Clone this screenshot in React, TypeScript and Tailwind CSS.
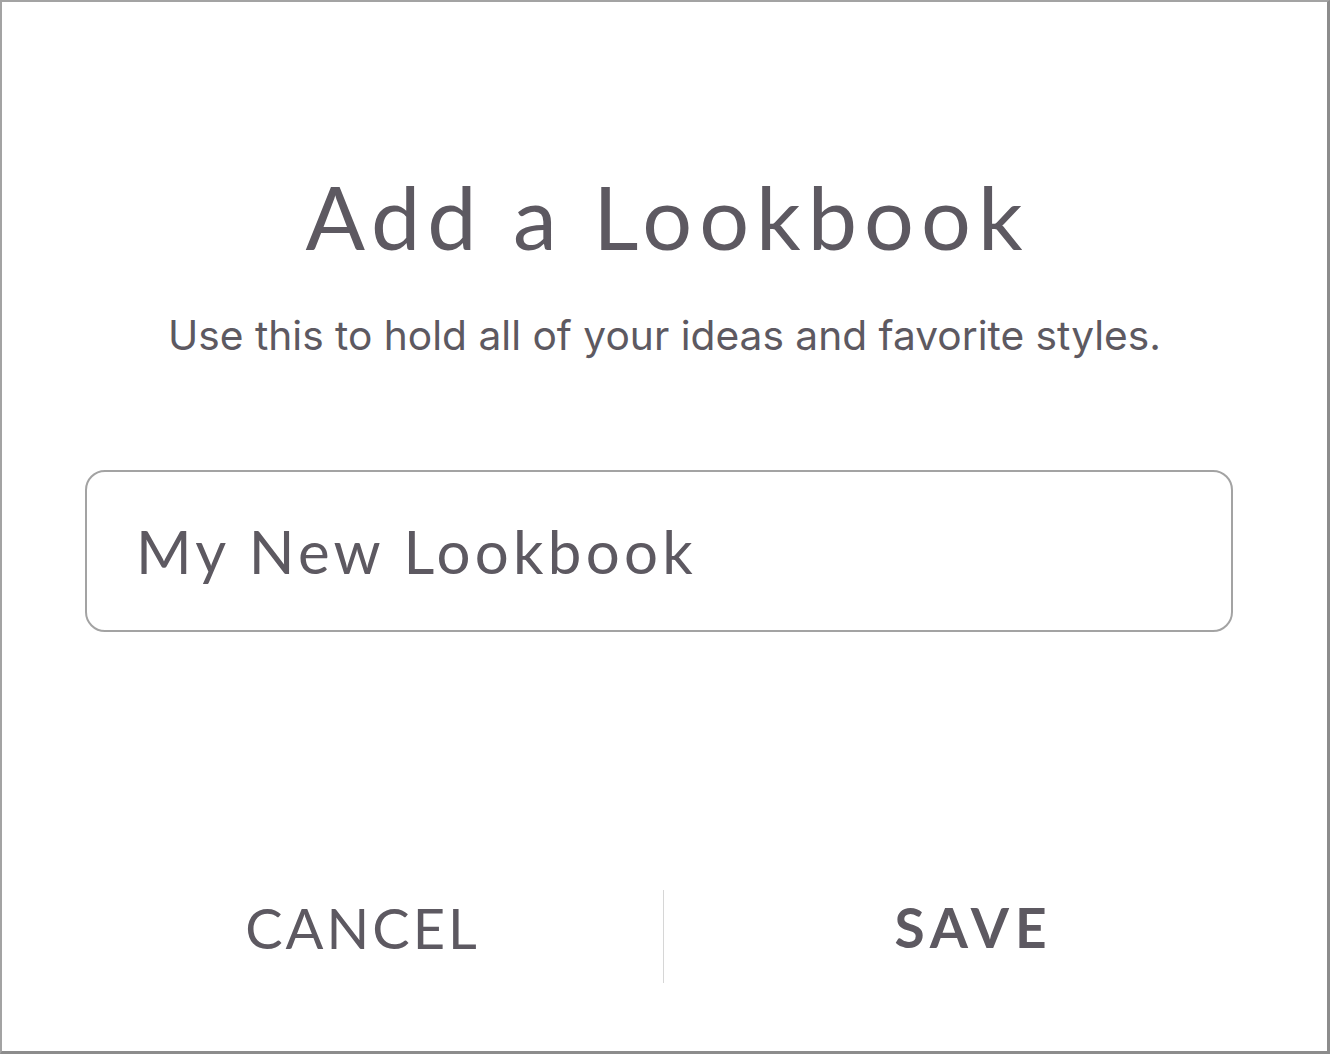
export default function App() {
  return (
    <div className="flex h-[1054px] w-[1330px] flex-col border-t-2 border-l-2 border-r-[3px] border-b-[3px] border-t-[#a3a3a3] border-l-[#a3a3a3] border-r-[#8c8c8c] border-b-[#8c8c8c] bg-white text-[#5d5961]">
      <h1 className="mt-[170px] pl-[6px] text-center font-['Lato',sans-serif] text-[88px] leading-none font-normal tracking-[7px]">
        Add a Lookbook
      </h1>
      <p className="mt-[56px] text-center font-['Inter',sans-serif] text-[40.7px] leading-none">
        Use this to hold all of your ideas and favorite styles.
      </p>

      <div className="mt-[113px] mr-[94px] ml-[83px] flex h-[162px] items-center rounded-[20px] border-2 border-[#a3a3a3] pr-[40px] pl-[49px]">
        <input
          type="text"
          defaultValue="My New Lookbook"
          aria-label="Lookbook name"
          className="w-full bg-transparent font-['Lato',sans-serif] text-[60px] leading-none tracking-[4.3px] text-[#5d5961] outline-none"
        />
      </div>

      <div className="mt-auto mb-[68px] flex h-[93px] items-center">
        <button
          type="button"
          className="flex h-full w-[661px] items-center justify-center pb-[18px] pl-[60px] font-['Lato',sans-serif] text-[56px] leading-none tracking-[3px]"
        >
          CANCEL
        </button>
        <div className="h-full w-px bg-[#d6d6d6]" />
        <button
          type="button"
          className="flex h-full flex-1 items-center justify-center pr-[44px] pb-[18px] font-['Lato',sans-serif] text-[55px] leading-none font-bold tracking-[6px]"
        >
          SAVE
        </button>
      </div>
    </div>
  );
}
